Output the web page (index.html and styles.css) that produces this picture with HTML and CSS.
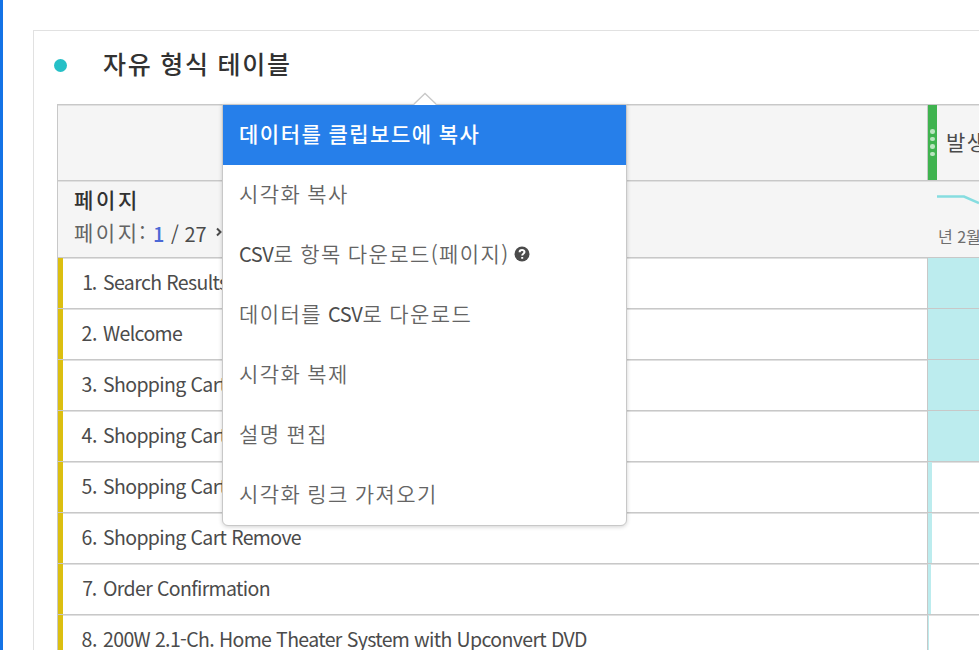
FILE: index.html
```html
<!DOCTYPE html>
<html lang="ko">
<head>
<meta charset="utf-8">
<title>자유 형식 테이블</title>
<link rel="stylesheet" href="styles.css">
</head>
<body>
<main class="workspace">
  <section class="panel">
    <header class="panel-head"><span class="dot"></span><h1>자유 형식 테이블</h1></header>
    <div class="table">
      <div class="line head-top">
        <div class="dimension"></div>
        <div class="metric metric-head">
          <span class="grip"><i></i><i></i><i></i><i></i></span>
          <span class="metric-name">발생</span>
        </div>
      </div>
      <div class="line head-sub">
        <div class="dimension paging">
          <strong>페이지</strong>
          <div class="pager"><span class="pager-label">페이지:</span><span class="page-now">1</span><span class="page-total">/ 27</span><svg class="chevron" viewBox="0 0 6 10"><path d="M1 1.5 4.5 5 1 8.5"/></svg></div>
        </div>
        <div class="metric trend">
          <svg class="spark" viewBox="0 0 42 12"><path d="M0 3.5H27L42 10"/></svg>
          <span class="date">년 2월</span>
        </div>
      </div>
      <div class="line row"><div class="dimension item"><span class="num narrow">1.</span><span class="name">Search Results</span></div><div class="metric full"></div></div>
      <div class="line row"><div class="dimension item"><span class="num">2.</span><span class="name">Welcome</span></div><div class="metric full"></div></div>
      <div class="line row"><div class="dimension item"><span class="num">3.</span><span class="name">Shopping Cart</span></div><div class="metric full"></div></div>
      <div class="line row"><div class="dimension item"><span class="num">4.</span><span class="name">Shopping Cart</span></div><div class="metric full"></div></div>
      <div class="line row"><div class="dimension item"><span class="num">5.</span><span class="name">Shopping Cart</span></div><div class="metric bar-large"></div></div>
      <div class="line row"><div class="dimension item"><span class="num">6.</span><span class="name">Shopping Cart Remove</span></div><div class="metric bar-large"></div></div>
      <div class="line row"><div class="dimension item"><span class="num narrow">7.</span><span class="name">Order Confirmation</span></div><div class="metric bar-medium"></div></div>
      <div class="line row"><div class="dimension item"><span class="num">8.</span><span class="name">200W 2.1-Ch. Home Theater System with Upconvert DVD</span></div><div class="metric bar-small"></div></div>
    </div>
  </section>
</main>
<nav class="menu">
  <svg class="pointer" viewBox="0 0 24 13"><path class="pointer-fill" d="M1 13 12 1.5 23 13Z"/><path class="pointer-edge" d="M1 12 12 1.5 23 12"/></svg>
  <ul>
    <li class="active">데이터를 클립보드에 복사</li>
    <li>시각화 복사</li>
    <li><span class="latin">CSV</span>로 항목 다운로드(페이지)<svg class="help" viewBox="0 0 16 16"><circle cx="8" cy="8" r="7.5"/><path d="M5.6 6.2C5.6 3.3 10.5 3.4 10.5 6.1 10.5 7.8 8.2 7.7 8.2 9.4M8.2 11v1.8"/></svg></li>
    <li>데이터를 <span class="latin">CSV</span>로 다운로드</li>
    <li>시각화 복제</li>
    <li>설명 편집</li>
    <li>시각화 링크 가져오기</li>
  </ul>
</nav>
</body>
</html>
```
FILE: styles.css
```css
* { box-sizing: border-box; }
body {
  margin: 0;
  width: 979px;
  height: 650px;
  overflow: hidden;
  background: #fff;
  color: #4b4b4b;
  font-family: "Noto Sans CJK KR", sans-serif;
}
.workspace {
  height: 650px;
  padding: 30px 0 0 30px;
  border-left: 3px solid #1473e6;
  overflow: hidden;
}
.panel {
  height: 640px;
  padding-left: 23px;
  border: solid #e1e1e1;
  border-width: 1px 0 0 1px;
}
.panel-head {
  display: flex;
  align-items: center;
  height: 73px;
  padding-bottom: 5px;
}
.dot {
  width: 13px;
  height: 13px;
  margin-left: -3px;
  border-radius: 50%;
  background: #26c0c7;
}
h1 {
  margin: 0 0 4px 36px;
  color: #323232;
  font-size: 25px;
  font-weight: 500;
  letter-spacing: 1.7px;
  word-spacing: -.8px;
  white-space: nowrap;
}
.table { border-left: 1px solid #c8c8c8; }
.line { display: flex; border-top: 1px solid #c8c8c8; box-shadow: inset 0 1px #e0e0e0; }
.head-top { height: 76px; background: #f5f5f5; }
.head-sub { height: 77px; background: #f5f5f5; }
.dimension { flex: 0 0 869px; }
.metric { flex: 1; overflow: hidden; white-space: nowrap; }
.metric-head { display: flex; align-items: center; border-left: 1px solid #c8c8c8; }
.grip {
  display: flex;
  flex: 0 0 9px;
  flex-direction: column;
  align-items: center;
  justify-content: center;
  gap: 3px;
  align-self: stretch;
  background: #3fb34f;
}
.grip i { width: 4.5px; height: 4.5px; border-radius: 50%; background: #b9e5bf; }
.metric-name { margin: 0 0 4px 9px; font-size: 21px; letter-spacing: 1.5px; }
.paging { padding: 3px 0 0 16px; }
.paging strong {
  display: block;
  color: #323232;
  font-size: 21px;
  font-weight: 500;
  line-height: 30px;
  letter-spacing: 2.7px;
}
.pager { display: flex; align-items: center; height: 36px; padding-top: 2px; font-size: 20px; white-space: nowrap; }
.pager-label { width: 79px; margin-bottom: 2px; color: #646464; font-size: 21px; letter-spacing: 2.5px; }
.page-now { width: 18px; color: #4b68d6; font-weight: 500; }
.page-total { width: 45px; }
.chevron { width: 6px; height: 10px; margin-top: -3px; fill: none; stroke: #4b4b4b; stroke-width: 2; }
.trend { padding: 12px 0 0 10px; }
.spark { display: block; width: 42px; height: 12px; fill: none; stroke: #86dde0; stroke-width: 2.5; }
.date { display: block; margin: 18px 0 0 1px; color: #6e6e6e; font-size: 16px; line-height: 26px; }
.row { height: 51px; }
.item {
  display: flex;
  align-items: center;
  gap: 6px;
  padding-bottom: 3px;
  border-left: 5px solid #dcbf10;
  font-size: 19.5px;
  letter-spacing: -.63px;
  white-space: nowrap;
}
.num { width: 34px; text-align: right; letter-spacing: -.4px; }
.narrow { letter-spacing: -1.2px; padding-right: 1px; }
.row .metric { border-left: 1px solid #c8c8c8; }
.full { background: #bcecee; }
.bar-large { background: linear-gradient(#bcecee, #bcecee) 0 0 / 4px 100% no-repeat; }
.bar-medium { background: linear-gradient(#bcecee, #bcecee) 0 0 / 3px 100% no-repeat; }
.bar-small { background: linear-gradient(#bcecee, #bcecee) 0 0 / 1px 100% no-repeat; }
.menu {
  position: absolute;
  top: 104px;
  left: 222px;
  width: 405px;
  height: 422px;
  border: 1px solid #c8c8c8;
  border-radius: 0 0 6px 6px;
  background: #fff;
  box-shadow: 0 1px 4px rgba(0, 0, 0, .18);
}
.pointer { position: absolute; top: -13px; left: 190px; width: 24px; height: 13px; }
.pointer-fill { fill: #fff; }
.pointer-edge { fill: none; stroke: #c8c8c8; stroke-width: 1.3; }
.menu ul { margin: 0; padding: 0; list-style: none; }
.menu li {
  display: flex;
  align-items: center;
  height: 60px;
  padding: 0 0 5px 16px;
  color: #646464;
  font-size: 21px;
  font-weight: 350;
  letter-spacing: 1.4px;
  word-spacing: -1.2px;
  white-space: pre;
}
.menu .active { background: #267fea; color: #fff; font-weight: 500; letter-spacing: 1.5px; }
.latin { margin-top: 2px; color: #4b4b4b; font-size: 20px; font-weight: 400; letter-spacing: -.4px; }
.help { width: 16px; height: 16px; margin: 2px 0 0 4px; }
.help circle { fill: #4b4b4b; }
.help path { fill: none; stroke: #fff; stroke-width: 2; }
```
